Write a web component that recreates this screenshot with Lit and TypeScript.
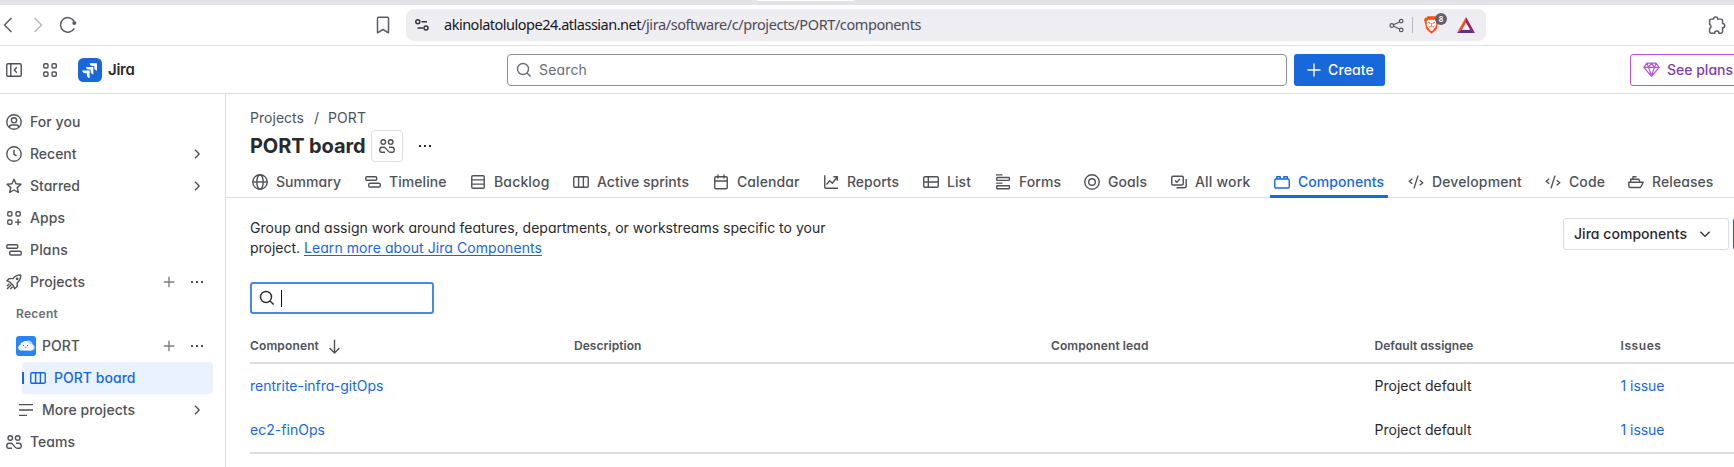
import { LitElement, html, svg, css, nothing } from "lit";
import { customElement, property } from "lit/decorators.js";

/** Text whose tracking is derived from the width it has to span. */
@customElement("ui-text")
class UiText extends LitElement {
  @property({ type: Number }) w = 0;
  @property() t = "";
  static styles = css`
    :host { display: inline-block; white-space: pre; flex: none; }
    .s { display: inline-block; white-space: pre; }
    :host(.u) .s { text-decoration: underline; text-underline-offset: 2px; text-decoration-skip-ink: none; }
  `;
  render() { return html`<span class="s">${this.t}</span>`; }
  updated() {
    const s = this.renderRoot.querySelector("span") as HTMLElement;
    if (!this.w) return;
    s.style.letterSpacing = "0px";
    const n = s.getBoundingClientRect().width;
    s.style.letterSpacing = ((this.w - n) / this.t.length).toFixed(4) + "px";
  }
}

const tx = (t: string, w: number, c = "") => html`<ui-text class=${c} .t=${t} .w=${w}></ui-text>`;

const board = svg`<rect x=".75" y="2.75" width="14.5" height="10.5" rx="1.2"/><path d="M5.6 3v10M10.4 3v10"/>`;
const timeline = svg`<rect x=".75" y="2.75" width="11" height="3.5" rx="1.2"/><rect x="3.75" y="9.25" width="11.5" height="3.8" rx="1.2"/>`;
const people = svg`<circle cx="4.3" cy="4" r="2.3"/><circle cx="11.7" cy="4" r="2.3"/><path d="M6 14.2H2.2c-.9 0-1.4-.6-1.4-1.4v-1c0-1.500 1-2.500 2.500-2.500h1.300c1 0 1.600.4 2.200 1.100l2.300 2.700c.6.700 1.200 1.100 2.200 1.100h2.400c.9 0 1.500-.6 1.500-1.400v-1c0-1.500-1-2.500-2.500-2.500H10"/>`;
const code = svg`<path d="M4.300 4.700L1.200 7.200l3.100 2.500M10 1.600L6 14.400M11.700 6.300l3.100 2.500-3.100 2.500"/>`;

const I: Record<string, unknown> = {
  board, timeline, people, code,
  back: svg`<path d="M11.500 1L4.500 8l7 7"/>`,
  fwd: svg`<path d="M4.500 1l7 7-7 7"/>`,
  reload: svg`<path d="M14.300 11.300A7.300 7.300 0 1 1 14 4"/><circle cx="14.300" cy="6" r="2" fill="currentColor" stroke="none"/>`,
  bookmark: svg`<path d="M2.500 1.200a1 1 0 0 1 1-1h9a1 1 0 0 1 1 1v14.600L8 12.500l-5.500 3.300z"/>`,
  tune: svg`<circle cx="3.800" cy="4.700" r="2"/><path d="M7.500 4.700H13M3.500 11H9"/><circle cx="12" cy="11" r="2"/>`,
  share: svg`<circle cx="3" cy="8" r="1.900"/><circle cx="13" cy="3.300" r="1.900"/><circle cx="13" cy="12.700" r="1.900"/><path d="M4.800 7.200l6.400-3M4.800 8.800l6.400 3"/>`,
  puzzle: svg`<path d="M1.500 3.300a1.300 1.300 0 0 1 1.300-1.300H5.200a2 2 0 0 1 4-.2v.2h3.200a1.300 1.300 0 0 1 1.300 1.300v2.900a2 2 0 0 1 0 4v3.700a1.300 1.300 0 0 1-1.300 1.300H10.300a2 2 0 0 0-4 0H2.800a1.300 1.300 0 0 1-1.300-1.300V11a2.200 2.200 0 0 0 0-4z"/>`,
  collapse: svg`<rect x=".75" y="1.750" width="14.500" height="12.500" rx="1.200"/><path d="M4.800 2v12M10.800 5.300L8.300 8l2.500 2.700"/>`,
  grid: svg`<rect x="1.700" y="1.700" width="4.300" height="4.300" rx="1.300"/><rect x="10" y="1.700" width="4.300" height="4.300" rx="1.300"/><rect x="1.700" y="10" width="4.300" height="4.300" rx="1.300"/><rect x="10" y="10" width="4.300" height="4.300" rx="1.300"/>`,
  search: svg`<circle cx="7" cy="7" r="5.500"/><path d="M11 11l3.600 3.600"/>`,
  plus: svg`<path d="M8 1.500v13M1.500 8h13"/>`,
  add: svg`<path d="M8 2.800v10.500M2.800 8h10.500"/>`,
  gem: svg`<path d="M3.800 2h8.400l3 4L8 14.400.8 6zM.8 6h14.400M5.200 6L8 14l2.800-8L8 2 5.200 6 3.800 2M10.800 6l1.400-4"/>`,
  user: svg`<circle cx="8" cy="8" r="7.250"/><circle cx="8" cy="6.300" r="2.600"/><path d="M3.500 13.500v-.4c0-1.300.9-2.100 2.100-2.100h4.800c1.200 0 2.100.8 2.100 2.100v.4"/>`,
  clock: svg`<circle cx="8" cy="8" r="7.250"/><path d="M8 3.700v4.600l2.600 1.500"/>`,
  star: svg`<path d="M8 1.200l2 4.600 5 .5-3.800 3.300 1.100 4.900L8 12l-4.300 2.500 1.100-4.900L1 6.300l5-.5z"/>`,
  apps: svg`<rect x="1.750" y="1.750" width="4.200" height="4.200" rx="1.300"/><rect x="10" y="1.750" width="4.200" height="4.200" rx="1.300"/><rect x="1.750" y="10" width="4.200" height="4.200" rx="1.300"/><path d="M12.100 9v6.200M9 12.100h6.200"/>`,
  rocket: svg`<path d="M7 4.600c2-2.700 4-3.600 7.200-3.700.4 0 .6.200.6.600-.1 3.200-1 5.200-3.600 7.200v3.800l-2.600 2.300-1.500-3.500-3.400-3.400L.9 6.900 3.200 4.600zM5.200 10.800L1 15M3.300 9.700L1 12M6.600 12.700L4.300 15"/><circle cx="11.200" cy="4.800" r=".7" fill="currentColor"/>`,
  chevR: svg`<path d="M6 3.800L10.200 8 6 12.200"/>`,
  chevD: svg`<path d="M3.400 5.800L8 10.400l4.600-4.600"/>`,
  dots: svg`<g fill="currentColor" stroke="none"><rect x="2" y="7" width="2" height="2"/><rect x="7" y="7" width="2" height="2"/><rect x="12" y="7" width="2" height="2"/></g>`,
  more: svg`<path d="M1 2.700h14M1 8h14M1 13.300h8"/>`,
  globe: svg`<circle cx="8" cy="8" r="7.250"/><ellipse cx="8" cy="8" rx="3.200" ry="7.250"/><path d="M1 8h14"/>`,
  backlog: svg`<rect x="1.750" y="1.750" width="12.500" height="12.500" rx="1.200"/><path d="M2 5.900h12M2 10.100h12"/>`,
  calendar: svg`<rect x="1.750" y="2.750" width="12.500" height="12" rx="1.200"/><path d="M2 7h12M5 .5v4M11 .5v4"/>`,
  reports: svg`<path d="M1.750 1.200v12.100c0 .6.400.95.950.950H15M3.500 10.500l3.200-3.700 2.600 2.400 4.700-6M10.300 2.800h4v4"/>`,
  list: svg`<rect x=".75" y="2.750" width="14.500" height="10.500" rx="1.200"/><path d="M1 8h14M5.300 3v10"/>`,
  forms: svg`<path d="M1 .9h6.500M1 9.100h6.500"/><rect x="1.750" y="3.500" width="12.700" height="2.900" rx=".6"/><rect x="1.750" y="11.800" width="12.700" height="2.900" rx=".6"/>`,
  goals: svg`<circle cx="8" cy="8" r="7.250"/><circle cx="8" cy="8" r="3.300"/>`,
  allwork: svg`<rect x=".75" y="2.250" width="11.500" height="8.800" rx="1.200"/><path d="M4 6.500l1.800 1.800L9 5M15.200 5v6.500c0 1.500-.8 2.300-2.200 2.300H5.500"/>`,
  component: svg`<rect x=".75" y="5" width="14.500" height="9" rx="1.200"/><path d="M2.700 5V2.700h3.500V5M9.800 5V2.700h3.500V5"/>`,
  ship: svg`<path d="M.8 8.200h14.400l-2.700 5.300H2.500C1.500 13.500.8 12.800.8 12zM2.700 8V5.200h8.100L12 8M5 5V2.700h3.500"/>`,
  down: svg`<path d="M8 .8v14M2.700 9.700L8 15l5.300-5.300"/>`,
};

const icon = (n: string, size = 16, sw = 1.5, cls = "") => html`<svg class="ic ${cls}" width=${size} height=${size}
  viewBox="0 0 16 16" fill="none" stroke="currentColor" stroke-width=${sw} stroke-linejoin="round">${I[n]}</svg>`;

interface NavItem { t: string; w: number; i: string; chev?: boolean; act?: boolean; lvl?: string; }
const NAV: NavItem[] = [
  { t: "For you", w: 50.5, i: "user" },
  { t: "Recent", w: 46.5, i: "clock", chev: true },
  { t: "Starred", w: 50, i: "star", chev: true },
  { t: "Apps", w: 35, i: "apps" },
  { t: "Plans", w: 38, i: "timeline" },
  { t: "Projects", w: 55, i: "rocket", act: true },
  { t: "Recent", w: 42, i: "", lvl: "heading" },
  { t: "PORT", w: 38, i: "cloud", act: true, lvl: "sub" },
  { t: "PORT board", w: 81.5, i: "board", lvl: "sel" },
  { t: "More projects", w: 93, i: "more", chev: true, lvl: "sub" },
  { t: "Teams", w: 45, i: "people" },
];

/* label, icon, label width, distance to the next tab */
const TABS: [string, string, number, number][] = [
  ["Summary", "globe", 65, 113], ["Timeline", "timeline", 57.5, 105], ["Backlog", "backlog", 55.5, 103],
  ["Active sprints", "board", 92, 140], ["Calendar", "calendar", 62.5, 110], ["Reports", "reports", 52, 100],
  ["List", "list", 24, 72], ["Forms", "forms", 42, 89], ["Goals", "goals", 39, 87],
  ["All work", "allwork", 55.500, 103], ["Components", "component", 86, 134],
  ["Development", "code", 90, 137], ["Code", "code", 36, 83], ["Releases", "ship", 61.5, 110],
];

@customElement("app-root")
class AppRoot extends LitElement {
  static styles = css`
    :host { display: block; width: 1734px; height: 467px; overflow: hidden; background: #fff; color: #292a2e;
      font: 400 14px/20px Inter, "Liberation Sans", sans-serif; font-feature-settings: "cv11"; }
    * { box-sizing: border-box; }
    .ic { display: block; flex: none; overflow: visible; }
    .strip { height: 5px; background: #e3e2e8; display: flex; justify-content: flex-start; padding-left: 757px; }
    .strip span { width: 97px; height: 1px; background: #fff; }
    .browser { height: 41px; border-bottom: 1px solid #dfdfe3; display: flex; align-items: center; color: #5b5c66; }
    .b2 { margin-left: 14px; color: #b9b9bf; } .b3 { margin-left: 14px; }
    .b4 { margin-left: 299px; }
    .url { margin-left: 15px; width: 1080px; flex: none; height: 32px; border-radius: 8px; background: #eeedf2; display: flex; align-items: center;
      font: 400 14.500px/20px "Noto Sans", sans-serif; color: #4c4c52; padding-left: 8px; }
    .url ui-text { padding-bottom: 2px; }
    .url .tune { color: #333338; margin-right: 14px; }
    .host { color: #17171a; }
    .share { margin-left: auto; color: #55555d; }
    .sep { width: 1px; height: 16px; background: #b9b8c0; margin: 0 11px 0 8px; }
    .brave { position: relative; width: 17px; height: 18px; }
    .badge { position: absolute; left: 11px; top: -3px; width: 12px; height: 12px; border-radius: 6px; background: #5f6070; color: #fff;
      font: 600 8px/12px "Noto Sans", sans-serif; text-align: center; }
    .tri { margin: 0 11px 0 16px; display: block; flex: none; }
    .puz { margin-left: 222px; }
    .top { height: 48px; border-bottom: 1px solid #dddee1; display: flex; align-items: center; color: #505258; }
    .t1 { margin-left: 6px; } .t2 { margin-left: 20px; }
    .logo { margin-left: 20px; margin-right: 6px; display: block; flex: none; }
    .brand { font-weight: 600; font-size: 15px; color: #292a2e; width: 399px; flex: none; }
    .search { width: 780px; flex: none; height: 32px; border: 1px solid #8c8f97; border-radius: 4px; display: flex; align-items: center;
      padding-left: 8px; gap: 7px; color: #6b6e76; }
    .create { margin-left: 7px; width: 91px; flex: none; height: 32px; border-radius: 3px; background: #1868db; color: #fff; font-weight: 500;
      display: flex; align-items: center; padding-left: 12px; gap: 6px; }
    .plans { margin-left: 245px; width: 124px; flex: none; height: 32px; border: 1px solid #af59e1; border-radius: 3px; color: #803fa5;
      font-weight: 500; display: flex; align-items: center; padding-left: 12px; gap: 7px; }
    .gem { color: #af59e1; }
    .body { display: flex; height: 373px; }
    .side { width: 226px; flex: none; border-right: 1px solid #dddee1; padding: 12px 12px 0 0; color: #505258; font-weight: 500; }
    .nav { height: 32px; display: flex; align-items: center; padding: 0 8px 0 6px; gap: 8px; }
    .nav .end { margin-left: auto; display: flex; gap: 12px; color: #505258; }
    .pl { color: #7d7f85; }
    .sub { padding-left: 18px; } .heading { padding-left: 16px; font-size: 12px; font-weight: 600; color: #6b6e76; }
    .cloud { width: 20px; margin-left: -2px; margin-right: -2px; }
    .sel { margin-left: 22px; padding-left: 0; gap: 8px; background: #e9f2fe; color: #1868db; border-radius: 4px; width: 191px; }
    .mark { width: 2px; height: 12px; background: #1868db; margin-right: -2px; }
    .main { flex: 1; min-width: 0; overflow: hidden; }
    .crumbs { display: flex; padding: 14px 0 0 24px; color: #505258; }
    .crumbs .sl { margin: 0 9px 0 10px; }
    .title { display: flex; align-items: center; height: 32px; margin-top: 2px; padding-left: 24px; }
    .h { font: 650 20px/24px Inter, sans-serif; width: 121px; }
    .team { width: 32px; height: 32px; border: 1px solid #dddee1; border-radius: 4px; display: flex; align-items: center; justify-content: center;
      color: #505258; margin-right: 14px; }
    .tabs { display: flex; height: 36px; border-bottom: 1px solid #dddee1; padding-left: 22px; color: #505258; font-weight: 500; }
    .tab { flex: none; }
    .tab div { height: 36px; width: max-content; padding: 5px 4px 1px; display: flex; align-items: center; gap: 8px; }
    .tab .on { color: #1868db; border-bottom: 3px solid #1868db; padding: 5px 4px 0; }
    .tab .on > * { margin-bottom: -2px; }
    .intro { display: flex; justify-content: space-between; align-items: flex-start; padding: 20px 0 0 24px; width: 1519px; }
    .intro a { color: #1868db; }
    .drop { display: flex; align-items: center; width: 166px; height: 32px; border: 1px solid #dddee1; border-radius: 3px; font-weight: 500;
      padding-left: 10px; gap: 10px; margin-left: auto; }
    .blue { width: 12px; height: 32px; margin-left: 4px; background: #1868db; border-radius: 3px; }
    .filter { margin: 24px 0 0 24px; width: 184px; height: 32px; border: 2px solid #4688ec; border-radius: 3px; display: flex;
      align-items: center; padding-left: 7px; }
    .caret { width: 1px; height: 17px; background: #111; margin-left: 6px; }
    .table { margin-left: 24px; border-bottom: 2px solid #dddddf; width: 1500px; }
    .row { display: grid; grid-template-columns: 324px 477px 323.5px 246px 1fr; align-items: center; height: 44px; }
    .head { height: 50px; padding-top: 16px; border-bottom: 2px solid #dddddf; font-size: 12px; font-weight: 600; color: #505258; }
    .head span { display: flex; align-items: center; gap: 8px; }
    .lnk { color: #1868db; }
  `;

  nav(n: NavItem) {
    const lead = n.i === "cloud"
      ? html`<svg class="ic cloud" width="20" height="20" viewBox="0 0 20 20"><rect width="20" height="20" rx="3" fill="#2684ff"/>
          <path d="M10 5.500a4 4 0 0 1 6.700 2.800 3.200 3.200 0 0 1-.2 6.100h-5z" fill="#b3d4ff"/>
          <path d="M4.700 14.500a2.900 2.900 0 0 1-.2-5.700 2.300 2.300 0 0 1 2.200-2.500 3.900 3.900 0 0 1 6.700 1.500 3.400 3.400 0 0 1 1.100 6.700z" fill="#fff"/>
          <circle cx="7.400" cy="9.600" r=".55" fill="#253858"/><circle cx="11.600" cy="9.600" r=".55" fill="#253858"/>
          <path d="M8.400 10.700h2.200a1.100 1.100 0 0 1-2.200 0z" fill="#ff5630"/></svg>`
      : n.i ? icon(n.i, 16, n.i === "more" ? 1.3 : 1.4) : nothing;
    return html`<div class="nav ${n.lvl ?? ""}">
      ${n.lvl === "sel" ? html`<span class="mark"></span>` : nothing}${lead}${tx(n.t, n.w)}
      ${n.chev ? html`<span class="end">${icon("chevR", 16, 1.4)}</span>` : nothing}
      ${n.act ? html`<span class="end">${icon("add", 16, 1.400, "pl")}${icon("dots", 16)}</span>` : nothing}
    </div>`;
  }

  render() {
    return html`
    <div class="strip"><span></span></div>
    <div class="browser">
      ${icon("back", 16, 1.5)}${icon("fwd", 16, 1.5, "b2")}${icon("reload", 16, 1.5, "b3")}
      ${icon("bookmark", 16, 1.5, "b4")}
      <div class="url">${icon("tune", 16, 1.5, "tune")}<span class="host">${tx("akinolatolulope24.atlassian.net", 197)}</span>${tx("/jira/software/c/projects/PORT/components", 280)}
        ${icon("share", 15, 1.3, "share")}<span class="sep"></span>
        <span class="brave"><svg class="ic" width="15" height="18" viewBox="0 0 15 18"><path d="M3.500.3h8l1.200 1.500 1.300-.1.900 2.300-.5 1.400-1.500 6.800c-.2 1-.8 1.700-1.600 2.300L7.500 17.800l-3.800-3.300c-.8-.6-1.400-1.300-1.600-2.300L.6 5.400.1 4 1 1.700l1.300.1z" fill="#ff4f0e"/>
          <path d="M4.200 3.600l1.800.3 1.500-.4 1.500.4 1.800-.3 1.700 2.100-.4 1.800.2 1.500-1.300 2.700-1 .8-.6 1.500-1.900 1.300-1.900-1.300-.6-1.500-1-.8-1.300-2.700.2-1.500-.4-1.800z" fill="#fff"/>
          <path d="M4.300 6.400l2 .6-.4.700zM10.700 6.400l-2 .6.4.700zM7.500 7v2.800l-1.100.7 1.100.5 1.100-.5-1.100-.7M4.800 9.500l.8 2M10.200 9.500l-.8 2" fill="none" stroke="#ff4f0e" stroke-width=".7"/></svg>
          <span class="badge">8</span></span>
        <svg class="tri" width="18" height="16" viewBox="0 0 18 16"><path d="M9 0L0 16l5-3 4-7z" fill="#ff4724"/><path d="M9 0l9 16-5-3-4-7z" fill="#9e1f63"/><path d="M0 16h18l-5-3.500H5z" fill="#662d91"/><path d="M9 6l4 6.800H5z" fill="#fff"/></svg>
      </div>
      ${icon("puzzle", 17, 1.4, "puz")}
    </div>
    <div class="top">
      ${icon("collapse", 16, 1.4, "t1")}${icon("grid", 16, 1.4, "t2")}
      <svg class="logo" width="24" height="24" viewBox="0 0 24 24"><rect width="24" height="24" rx="5.500" fill="#1868db"/>
        <g fill="#fff"><path d="M11.700 5.200H19v7.500c-1.800-.3-2.700-1.400-2.700-3.100V7.900h-1.700c-1.700 0-2.700-.9-2.900-2.700z"/><path d="M8 8.900h7.300v7.500c-1.800-.3-2.700-1.400-2.700-3.100v-1.700h-1.700C9.200 11.600 8.200 10.700 8 8.900z"/><path d="M4.300 12.600h7.300v7.500c-1.800-.3-2.700-1.400-2.700-3.100v-1.700H7.200c-1.700 0-2.700-.9-2.900-2.700z"/></g></svg>
      <div class="brand">${tx("Jira", 26.500)}</div>
      <div class="search">${icon("search", 16, 1.4)}${tx("Search", 48)}</div>
      <div class="create">${icon("plus", 16, 1.4)}${tx("Create", 46)}</div>
      <div class="plans">${icon("gem", 17, 1.200, "gem")}${tx("See plans", 66)}</div>
    </div>
    <div class="body">
      <div class="side">${NAV.map((n) => this.nav(n))}</div>
      <div class="main">
        <div class="crumbs">${tx("Projects", 54)}<span class="sl">/</span>${tx("PORT", 38)}</div>
        <div class="title"><span class="h">${tx("PORT board", 115.5)}</span><span class="team">${icon("people", 16, 1.4)}</span>${icon("dots", 16)}</div>
        <div class="tabs">${TABS.map(([t, i, w, p]) => html`<div class="tab" style="width:${p}px"><div class=${t === "Components" ? "on" : ""}>${icon(i, 16, 1.4)}${tx(t, w)}</div></div>`)}</div>
        <div class="intro">
          <div><div>${tx("Group and assign work around features, departments, or workstreams specific to your", 575.500)}</div>
            <div>${tx("project. ", 54)}<a>${tx("Learn more about Jira Components", 238, "u")}</a></div></div>
          <div class="drop">${tx("Jira components", 113)}${icon("chevD", 16, 1.3)}</div><span class="blue"></span>
        </div>
        <div class="filter">${icon("search", 16, 1.4)}<span class="caret"></span></div>
        <div class="table">
          <div class="row head"><span>${tx("Component", 69)}${icon("down", 15, 1.5)}</span>${tx("Description", 67.500)}${tx("Component lead", 97.500)}${tx("Default assignee", 99)}${tx("Issues", 41)}</div>
          ${[["rentrite-infra-gitOps", 133.500], ["ec2-finOps", 75]].map(([t, w]) => html`<div class="row"><span class="lnk">${tx(t as string, w as number)}</span><span></span><span></span>${tx("Project default", 97)}<span class="lnk">${tx("1 issue", 44)}</span></div>`)}
        </div>
      </div>
    </div>`;
  }
}
